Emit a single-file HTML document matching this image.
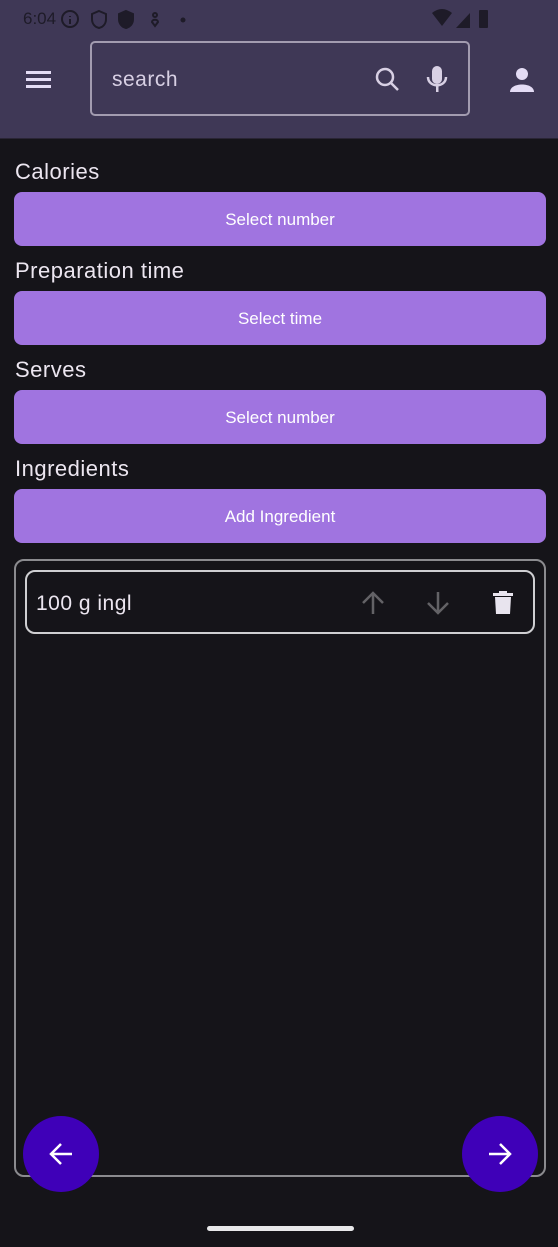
<!DOCTYPE html>
<html><head><style>
*{margin:0;padding:0;box-sizing:border-box}
body{width:558px;height:1247px;background:#151419;font-family:"Liberation Sans",sans-serif;position:relative;overflow:hidden;color:#ece6f0}
.hdr{position:absolute;left:0;top:0;width:558px;height:139px;background:#3f3856;border-bottom:1px solid #2a2535}
.lbl{position:absolute;left:15px;font-size:22px;letter-spacing:.5px;color:#ece6f0}
.btn{position:absolute;left:14px;width:532px;height:54px;background:#a074e0;border-radius:8px;color:#fff;font-size:17px;text-align:center;line-height:56px}
</style></head><body>
<div class="hdr">
<div style="position:absolute;left:23px;top:9px;font-size:17px;color:#1e1b28">6:04</div>
<svg style="position:absolute;left:60px;top:8px" width="140" height="22" fill="none" stroke="#1e1b28" stroke-width="2">
<circle cx="10" cy="11" r="8"/><path d="M10 8v1M10 11v5"/>
<path d="M39 3l7 3v5c0 5-3 8-7 9-4-1-7-4-7-9V6z"/>
<path d="M66 3l7 3v5c0 5-3 8-7 9-4-1-7-4-7-9V6z" fill="#1e1b28"/>
<circle cx="95" cy="7" r="2"/><path d="M92 14c0-3 6-3 6 0l-3 4z"/>
<circle cx="123" cy="12" r="1.5" fill="#1e1b28"/>
</svg>
<svg style="position:absolute;left:432px;top:8px" width="92" height="22" fill="#1e1b28">
<path d="M0 5q10-8 20 0l-10 13z"/><path d="M24 20h14V5z"/><rect x="47" y="2" width="9" height="18" rx="1"/>
</svg>
<svg style="position:absolute;left:26px;top:70px" width="26" height="20" fill="#e4dcf5"><rect y="1" width="25" height="3"/><rect y="8" width="25" height="3"/><rect y="15" width="25" height="3"/></svg>
<div style="position:absolute;left:90px;top:41px;width:380px;height:75px;border:2px solid #a39cb0;border-radius:5px"></div>
<div style="position:absolute;left:112px;top:68px;font-size:21px;color:#d8d0e4;letter-spacing:.5px">search</div>
<svg style="position:absolute;left:374px;top:66px" width="28" height="26" fill="none" stroke="#d8d0e4" stroke-width="2.5"><circle cx="11" cy="11" r="8"/><path d="M17 17l7 7"/></svg>
<svg style="position:absolute;left:426px;top:64px" width="24" height="30" fill="#d8d0e4"><rect x="6" y="2" width="10" height="18" rx="5"/><path d="M2 13c0 11 18 11 18 0" fill="none" stroke="#d8d0e4" stroke-width="2.5"/><rect x="10" y="22" width="2.5" height="6"/></svg>
<svg style="position:absolute;left:508px;top:66px" width="28" height="26" fill="#e4dcf5"><circle cx="14" cy="8" r="6"/><path d="M2 26c0-10 24-10 24 0z"/></svg>
</div>
<div class="lbl" style="top:159px">Calories</div>
<div class="btn" style="top:192px">Select number</div>
<div class="lbl" style="top:258px">Preparation time</div>
<div class="btn" style="top:291px">Select time</div>
<div class="lbl" style="top:357px">Serves</div>
<div class="btn" style="top:390px">Select number</div>
<div class="lbl" style="top:456px">Ingredients</div>
<div class="btn" style="top:489px">Add Ingredient</div>
<div style="position:absolute;left:14px;top:559px;width:532px;height:618px;border:2px solid #8b8b8f;border-radius:10px"></div>
<div style="position:absolute;left:25px;top:570px;width:510px;height:64px;border:2.5px solid #cfcfd2;border-radius:10px"></div>
<div style="position:absolute;left:36px;top:592px;font-size:21px;letter-spacing:.5px">100 g ingl</div>
<svg style="position:absolute;left:360px;top:590px" width="26" height="26" fill="none" stroke="#636266" stroke-width="2.5"><path d="M13 24V3M3 13L13 3l10 10"/></svg>
<svg style="position:absolute;left:425px;top:590px" width="26" height="26" fill="none" stroke="#636266" stroke-width="2.5"><path d="M13 2v21M3 13l10 10 10-10"/></svg>
<svg style="position:absolute;left:492px;top:590px" width="24" height="26" fill="#e8e4ee"><rect x="1" y="3" width="20" height="3"/><rect x="7" y="1" width="8" height="3"/><path d="M3 7h16l-1 17H4z"/></svg>
<div style="position:absolute;left:23px;top:1116px;width:76px;height:76px;border-radius:50%;background:#3f00b8"></div>
<svg style="position:absolute;left:48px;top:1141px" width="26" height="26" fill="none" stroke="#fff" stroke-width="2.5"><path d="M24 13H3M13 3L3 13l10 10"/></svg>
<div style="position:absolute;left:462px;top:1116px;width:76px;height:76px;border-radius:50%;background:#3f00b8"></div>
<svg style="position:absolute;left:487px;top:1141px" width="26" height="26" fill="none" stroke="#fff" stroke-width="2.5"><path d="M2 13h21M13 3l10 10-10 10"/></svg>
<div style="position:absolute;left:207px;top:1226px;width:147px;height:5px;border-radius:3px;background:#e8e8ea"></div>
</body></html>
